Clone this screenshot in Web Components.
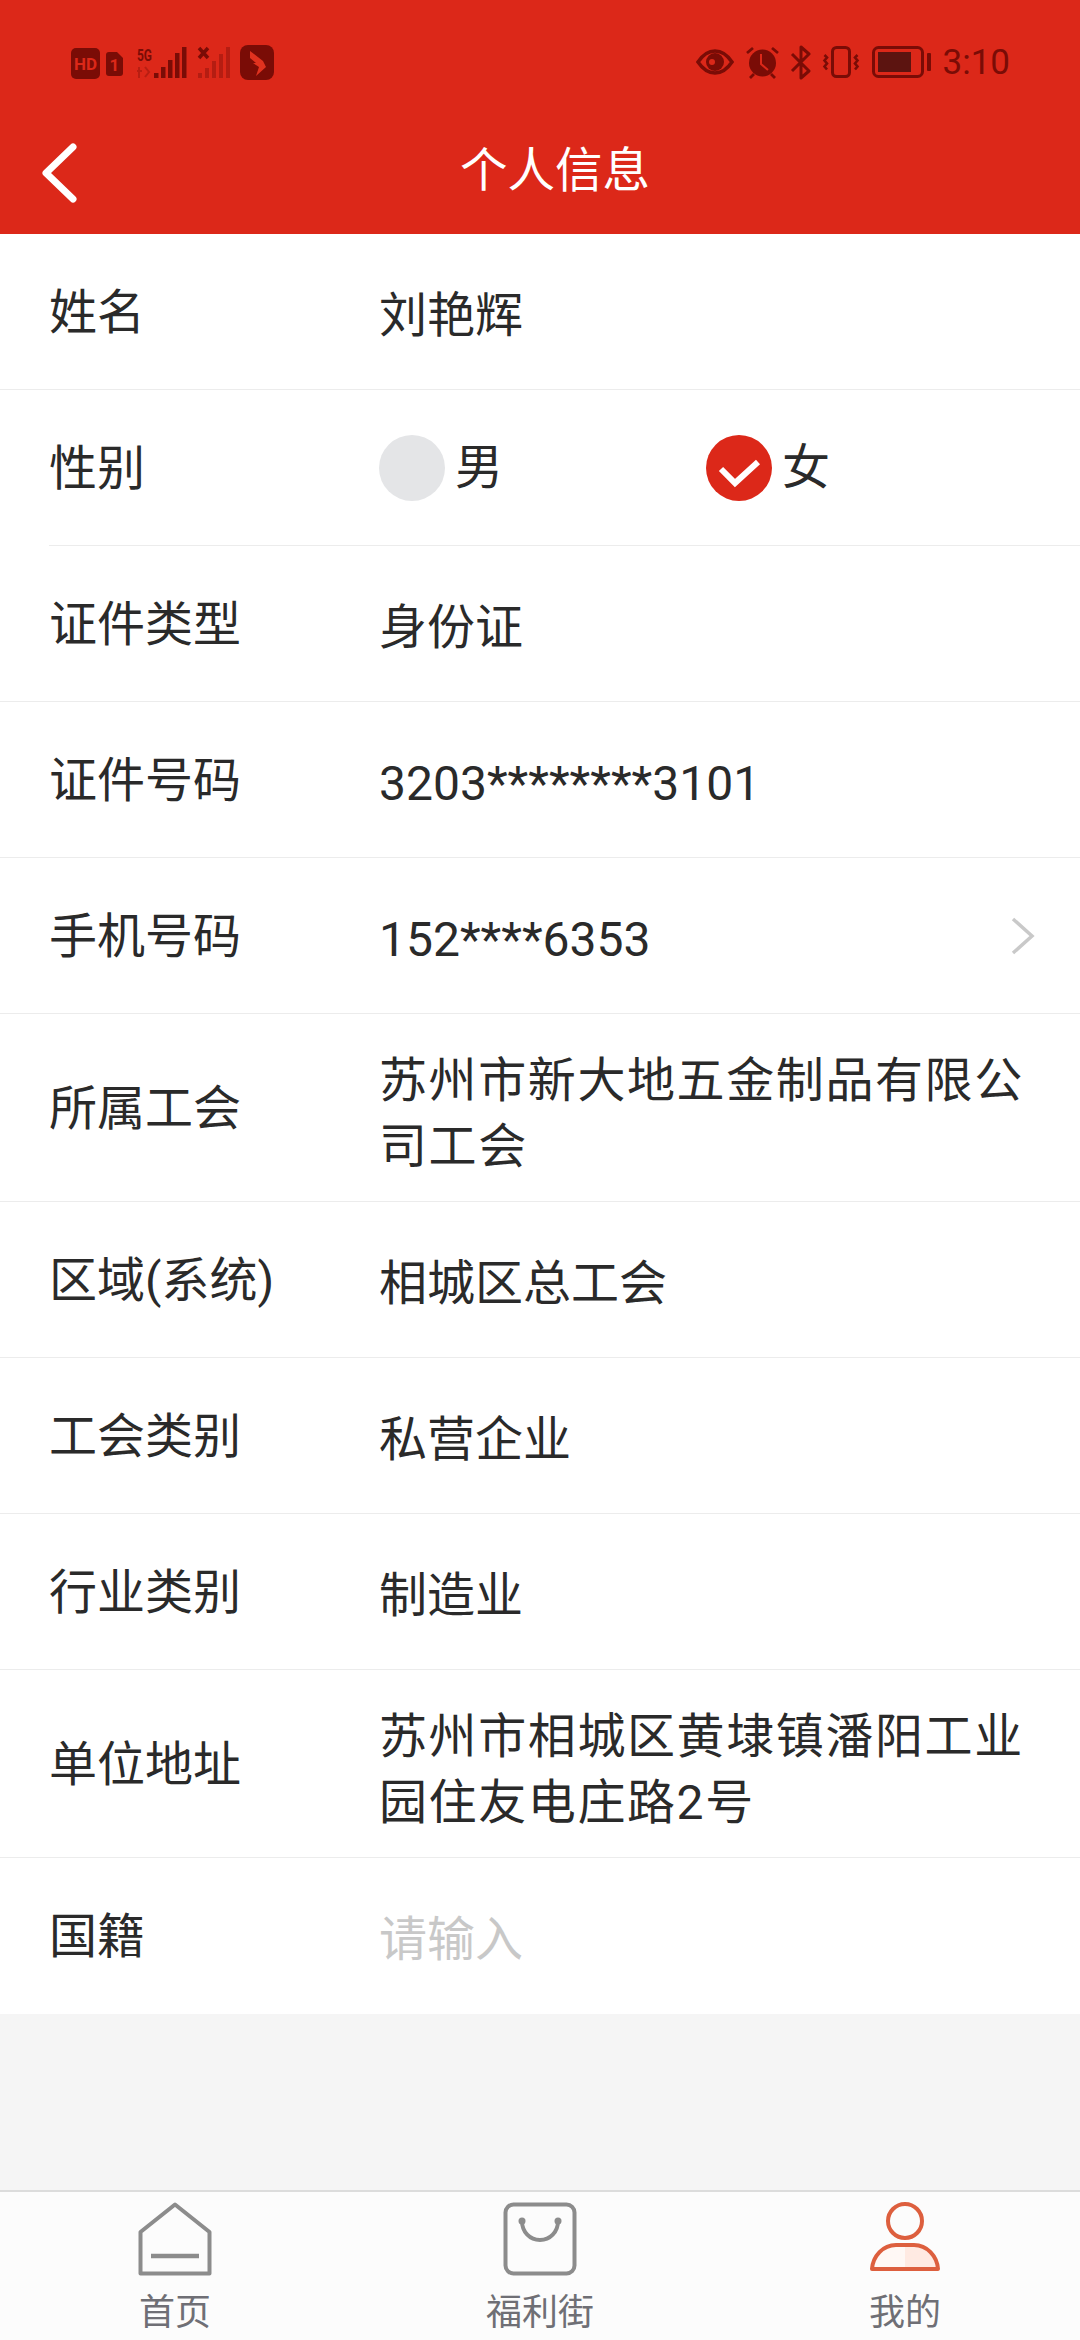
<!DOCTYPE html>
<html lang="zh">
<head>
<meta charset="utf-8">
<title>个人信息</title>
<style>
    html, body { margin: 0; padding: 0; }
    body {
        width: 1080px;
        height: 2340px;
        display: flex;
        flex-direction: column;
        background: #f5f5f5;
        font-family: Roboto, "Noto Sans CJK SC", sans-serif;
    }
    info-list { flex: 1; }
</style>
</head>
<body>
<app-header></app-header>
<info-list>
    <info-row label="姓名" value="刘艳辉"></info-row>
    <info-row label="性别" inset><gender-pick></gender-pick></info-row>
    <info-row label="证件类型" value="身份证"></info-row>
    <info-row label="证件号码" value="3203********3101"></info-row>
    <info-row label="手机号码" value="152****6353" arrow></info-row>
    <info-row label="所属工会" value="苏州市新大地五金制品有限公司工会" tall spaced></info-row>
    <info-row label="区域(系统)" value="相城区总工会"></info-row>
    <info-row label="工会类别" value="私营企业"></info-row>
    <info-row label="行业类别" value="制造业"></info-row>
    <info-row label="单位地址" value="苏州市相城区黄埭镇潘阳工业园住友电庄路2号" tall spaced></info-row>
    <info-row label="国籍" value="请输入" placeholder last></info-row>
</info-list>
<tab-bar></tab-bar>

<script>
class AppHeader extends HTMLElement {
    constructor() {
        super()
        this.attachShadow({ mode: 'open' })
    }

    connectedCallback() {
        const dark = '#7a0c06'
        const red = '#dc2819'
        this.shadowRoot.innerHTML = `
            <style>
                :host {
                    display: block;
                    height: 234px;
                    background: ${red};
                    flex: none;
                }
                .status {
                    height: 124px;
                    display: flex;
                    align-items: center;
                    justify-content: space-between;
                    padding-left: 68px;
                    box-sizing: border-box;
                }
                .status svg { display: block; }
                .time {
                    font: 35px Roboto, sans-serif;
                    color: ${dark};
                    line-height: 35px;
                    margin-left: 12px;
                }
                .right {
                    display: flex;
                    align-items: center;
                    padding-right: 70px;
                }
                .nav {
                    height: 110px;
                    box-sizing: border-box;
                    position: relative;
                    display: flex;
                    align-items: center;
                    justify-content: center;
                    color: #fff;
                    font-size: 47.500px;
                    padding: 0 0 26px 30px;
                }
                .back {
                    position: absolute;
                    left: 40px;
                    top: 18px;
                }
            </style>
            <div class="status">
                <svg width="210" height="38" viewBox="0 0 210 38">
                    <rect x="3" y="5" width="29" height="31" rx="5" fill="${dark}"/>
                    <text x="17.500" y="26.500" font-family="Roboto, sans-serif" font-size="17" font-weight="700" fill="${red}" text-anchor="middle">HD</text>
                    <path d="M41 9h8l6 6v15a3 3 0 0 1-3 3H41a3 3 0 0 1-3-3V12a3 3 0 0 1 3-3z" fill="${dark}"/>
                    <text x="46.500" y="28" font-family="Roboto, sans-serif" font-size="17" font-weight="700" fill="${red}" text-anchor="middle">1</text>
                    <text x="69" y="18" font-family="Roboto, sans-serif" font-size="16" font-weight="700" fill="${dark}" textLength="15" lengthAdjust="spacingAndGlyphs">5G</text>
                    <path d="M69 28h5M71 24v11M77 24l4 5-4 5" fill="none" stroke="#a81a10" stroke-width="2" opacity=".7"/>
                    <g fill="${dark}">
                        <rect x="86" y="30" width="4.500" height="5"/>
                        <rect x="93" y="24" width="4.500" height="11"/>
                        <rect x="100" y="17" width="4.500" height="18"/>
                        <rect x="107" y="10" width="4.500" height="25"/>
                        <rect x="114" y="4" width="4.500" height="31"/>
                    </g>
                    <path d="M131 5l9 10M140 5l-9 10" stroke="${dark}" stroke-width="3.500"/>
                    <g fill="#b51d12">
                        <rect x="130" y="30" width="4" height="5"/>
                        <rect x="137" y="25" width="4" height="10"/>
                        <rect x="144" y="18" width="4" height="17"/>
                        <rect x="151" y="11" width="4" height="24"/>
                        <rect x="158" y="4" width="4" height="31"/>
                    </g>
                    <rect x="172" y="2" width="34" height="35" rx="8" fill="${dark}"/>
                    <path d="M182 8l13 10 3 6-10 9 3-9-6-4 3 0-6-5z" fill="#e0321f"/>
                </svg>
                <div class="right">
                    <svg width="38" height="26" viewBox="0 0 38 26">
                        <path d="M2 13C8 4 14 2 19 2s11 2 17 11c-6 9-12 11-17 11S8 22 2 13z" fill="none" stroke="${dark}" stroke-width="3.500"/>
                        <circle cx="19" cy="13" r="9" fill="${dark}"/>
                        <circle cx="16" cy="13" r="3" fill="${red}"/>
                    </svg>
                    <svg width="33" height="33" viewBox="0 0 33 33" style="margin-left:12px">
                        <circle cx="16.500" cy="17" r="13.500" fill="${dark}"/>
                        <path d="M15 8v10l7 6" fill="none" stroke="${red}" stroke-width="2"/>
                        <path d="M1 7l6-5M32 7l-6-5M4 32l4-4M29 32l-4-4" stroke="${dark}" stroke-width="2.800"/>
                    </svg>
                    <svg width="21" height="35" viewBox="0 0 21 35" style="margin-left:11px">
                        <path d="M2 9l17 17-8 7V2l8 7L2 26" fill="none" stroke="${dark}" stroke-width="3" stroke-linejoin="round"/>
                    </svg>
                    <svg width="38" height="32" viewBox="0 0 38 32" style="margin-left:11px">
                        <rect x="10.500" y="1.500" width="17" height="29" rx="4" fill="none" stroke="${dark}" stroke-width="3"/>
                        <path d="M2.500 9l2.500 2.500-2.500 3 2.500 3-2.500 3 2.500 3M35.500 9L33 11.500l2.500 3-2.500 3 2.500 3-2.500 3" fill="none" stroke="${dark}" stroke-width="2.600"/>
                    </svg>
                    <svg width="59" height="32" viewBox="0 0 59 32" style="margin-left:12px">
                        <rect x="1.500" y="1.500" width="49" height="29" rx="5" fill="none" stroke="${dark}" stroke-width="3"/>
                        <rect x="6" y="6" width="33" height="20" fill="#5c1410"/>
                        <rect x="55" y="7" width="4" height="18" rx="1" fill="${dark}"/>
                    </svg>
                    <span class="time">3:10</span>
                </div>
            </div>
            <div class="nav">
                <svg class="back" width="38" height="62" viewBox="0 0 38 62">
                    <path d="M33 5L6 31l27 26" fill="none" stroke="#fff" stroke-width="7" stroke-linecap="round" stroke-linejoin="round"/>
                </svg>
                <span>个人信息</span>
            </div>
        `
    }
}

class InfoList extends HTMLElement {
    constructor() {
        super()
        this.attachShadow({ mode: 'open' })
    }

    connectedCallback() {
        this.shadowRoot.innerHTML = `
            <style>
                :host { display: block; }
            </style>
            <slot></slot>
        `
    }
}

class InfoRow extends HTMLElement {
    constructor() {
        super()
        this.attachShadow({ mode: 'open' })
    }

    connectedCallback() {
        const label = this.getAttribute('label')
        const value = this.getAttribute('value')
        const tall = this.hasAttribute('tall')
        const last = this.hasAttribute('last')
        this.shadowRoot.innerHTML = `
            <style>
                :host {
                    display: block;
                    background: #fff;
                    font-size: 48px;
                }
                .row {
                    display: grid;
                    grid-template-columns: 330px 1fr;
                    align-items: center;
                    box-sizing: border-box;
                    height: ${tall ? 187 : last ? 156 : 155}px;
                    padding-left: 49px;
                    padding-right: ${this.hasAttribute('arrow') ? '44px' : '50px'};
                }
                .line {
                    height: 1px;
                    background: #ececec;
                    margin-left: ${this.hasAttribute('inset') ? '49px' : '0'};
                }
                .label { color: #2a2a2a; position: relative; top: -4px; }
                .value {
                    color: ${this.hasAttribute('placeholder') ? '#c8c8c8' : '#2a2a2a'};
                    line-height: 66px;
                    letter-spacing: ${this.hasAttribute('spaced') ? '1.600px' : '0'};
                    position: relative;
                    top: ${tall ? 6 : 4}px;
                    flex: 1;
                }
                .cell {
                    display: flex;
                    align-items: center;
                    justify-content: space-between;
                }
            </style>
            <div class="row">
                <span class="label">${label}</span>
                <div class="cell">
                    <div class="value">${value === null ? '<slot></slot>' : value}</div>
                    ${this.hasAttribute('arrow') ? `
                    <svg width="26" height="40" viewBox="0 0 26 40">
                        <path d="M3 3l19 17L3 37" fill="none" stroke="#c9c9c9" stroke-width="3.500"/>
                    </svg>` : ''}
                </div>
            </div>
            ${last ? '' : '<div class="line"></div>'}
        `
    }
}

class GenderPick extends HTMLElement {
    constructor() {
        super()
        this.attachShadow({ mode: 'open' })
    }

    connectedCallback() {
        this.shadowRoot.innerHTML = `
            <style>
                :host {
                    display: grid;
                    grid-template-columns: 327px 1fr;
                    margin-top: -8px;
                }
                .opt { display: flex; align-items: center; gap: 10px; }
                .dot, svg {
                    width: 66px;
                    height: 66px;
                    display: block;
                }
                .dot { border-radius: 50%; background: #e4e5e7; }
            </style>
            <div class="opt"><span class="dot"></span><span>男</span></div>
            <div class="opt">
                <svg viewBox="0 0 66 66">
                    <circle cx="33" cy="33" r="33" fill="#dc2819"/>
                    <path d="M15 34l14 14 23-21" fill="none" stroke="#fff" stroke-width="6"/>
                </svg>
                <span>女</span>
            </div>
        `
    }
}

class TabBar extends HTMLElement {
    constructor() {
        super()
        this.attachShadow({ mode: 'open' })
    }

    connectedCallback() {
        const grey = '#8c8c8c'
        this.shadowRoot.innerHTML = `
            <style>
                :host {
                    display: grid;
                    grid-template-columns: 350px 380px 350px;
                    height: 148px;
                    flex: none;
                    background: #fcfcfc;
                    border-top: 2px solid #dcdcdc;
                    color: #6f6f75;
                    font-size: 36px;
                }
                .tab {
                    display: flex;
                    flex-direction: column;
                    align-items: center;
                    padding-top: 10px;
                    line-height: 50px;
                    gap: 12px;
                }
                svg { display: block; }
            </style>
            <div class="tab">
                <svg width="74" height="74" viewBox="0 0 74 74">
                    <path d="M2.500 30L37 2.500 71.500 30v41.500h-69z" fill="none" stroke="${grey}" stroke-width="4" stroke-linejoin="round"/>
                    <path d="M13 54h48" stroke="${grey}" stroke-width="4.500"/>
                </svg>
                <span>首页</span>
            </div>
            <div class="tab">
                <svg width="74" height="74" viewBox="0 0 74 74">
                    <rect x="2.500" y="2.500" width="69" height="69" rx="8" fill="none" stroke="${grey}" stroke-width="4"/>
                    <path d="M19 19c0 11 8 19 18 19s18-8 18-19" fill="none" stroke="${grey}" stroke-width="4"/>
                    <circle cx="19" cy="19" r="3.500" fill="${grey}"/>
                    <circle cx="55" cy="19" r="3.500" fill="${grey}"/>
                </svg>
                <span>福利街</span>
            </div>
            <div class="tab">
                <svg width="74" height="74" viewBox="0 0 74 74">
                    <defs>
                        <linearGradient id="half">
                            <stop offset="0.500" stop-color="#fff8f5"/>
                            <stop offset="0.500" stop-color="#ffeae2"/>
                        </linearGradient>
                    </defs>
                    <circle cx="37" cy="19" r="17" fill="none" stroke="#dd5f3e" stroke-width="4"/>
                    <path d="M4 67c1-13 11-24 24-24h18c13 0 23 11 24 24z" fill="url(#half)" stroke="#dd5f3e" stroke-width="4" stroke-linejoin="round"/>
                </svg>
                <span>我的</span>
            </div>
        `
    }
}

customElements.define('app-header', AppHeader)
customElements.define('info-list', InfoList)
customElements.define('info-row', InfoRow)
customElements.define('gender-pick', GenderPick)
customElements.define('tab-bar', TabBar)
</script>
</body>
</html>
